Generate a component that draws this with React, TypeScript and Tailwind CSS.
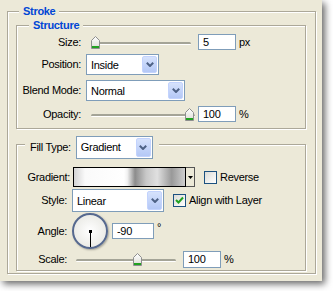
import { ReactNode } from "react";

const etched = "border border-[#ACA899] shadow-[inset_1px_1px_0_#fff,1px_1px_0_#fff]";

function Legend({ children, className }: { children: ReactNode, className: string }) {
	return (
		<div className={`w-fit bg-[#ECE9D8] px-[4px] text-[11px] font-bold leading-[14px] tracking-[-0.3px] text-[#0046D5] ${className}`}>
			{children}
		</div>
	);
}

function Chevron() {
	return (
		<svg width="8" height="5" viewBox="0 0 8 5">
			<path d="M0.8 0.8 L4 4 L7.2 0.8" fill="none" stroke="#4D6185" strokeWidth="2" />
		</svg>
	);
}

function Select({ value, className }: { value: string, className: string }) {
	return (
		<div className={`flex items-stretch border border-[#7F9DB9] bg-white p-px ${className}`}>
			<div className="flex flex-1 items-center pl-[3px] pt-px">{value}</div>
			<div className="flex w-[15px] items-center justify-center rounded-[2px] border border-[#C3D3FD] bg-linear-to-b from-[#D6E2FC] to-[#B4C8F6]">
				<Chevron />
			</div>
		</div>
	);
}

function Input({ value, className }: { value: string, className: string }) {
	return (
		<div className={`flex items-center border border-[#7F9DB9] bg-white pl-[4px] ${className}`}>{value}</div>
	);
}

function Thumb() {
	return (
		<svg width="9" height="13" viewBox="0 0 9 13">
			<defs>
				<linearGradient id="th" x1="0" y1="0" x2="0" y2="1">
					<stop offset="0" stopColor="#ffffff" />
					<stop offset="1" stopColor="#dcdcd4" />
				</linearGradient>
			</defs>
			<path d="M0.5 4.5 L4.5 0.5 L8.5 4.5 L8.5 12.5 L0.5 12.5 Z" fill="url(#th)" stroke="#8E8F8F" />
			<rect x="1" y="10" width="7" height="2" fill="#21A121" />
		</svg>
	);
}

// track with the thumb lying over it
function Slider({ className, thumb }: { className: string, thumb: string }) {
	return (
		<div className={`relative h-[13px] ${className}`}>
			<div className="absolute left-[1px] right-0 top-[6px] h-[3px] rounded-full border-t-2 border-[#A4A497] bg-white" />
			<div className={`absolute top-0 ${thumb}`}><Thumb /></div>
		</div>
	);
}

function Checkbox({ checked }: { checked?: boolean }) {
	return (
		<div className="flex h-[13px] w-[13px] items-center justify-center border border-[#1C5180] bg-linear-to-br from-[#DCDCD7] to-white">
			{checked && (
				<svg width="9" height="9" viewBox="0 0 9 9">
					<path d="M1 4 L3.5 6.5 L8 1.5" fill="none" stroke="#21A121" strokeWidth="2" />
				</svg>
			)}
		</div>
	);
}

export default function App() {
	return (
		<div className="h-[291px] w-[333px] bg-white font-['Liberation_Sans',Arial,sans-serif] text-[11px] leading-[13px] tracking-[-0.3px] text-black">
			<div className="h-[281px] w-[322px] bg-[#ECE9D8] pl-[7px] pt-[11px] shadow-[3px_3px_7px_rgba(0,0,0,0.6)]">

				{/* Stroke */}
				<div className={`flex h-[263px] w-[309px] flex-col ${etched}`}>
					<Legend className="ml-[11px] mt-[-8px]">Stroke</Legend>

					<div className="flex flex-col gap-[15px] pl-[8px] pt-[7px]">
						{/* Structure */}
						<div className={`flex h-[104px] w-[290px] flex-col ${etched}`}>
							<Legend className="ml-[12px] mt-[-8px]">Structure</Legend>

							<div className="mt-[2px] flex flex-col gap-[5px]">
								<div className="flex h-[16px] items-center">
									<div className="w-[64px] text-right">Size:</div>
									<Slider className="ml-[9px] w-[101px]" thumb="left-[1px]" />
									<Input value="5" className="ml-[7px] h-[16px] w-[38px]" />
									<div className="ml-[3px]">px</div>
								</div>

								<div className="-mt-px flex h-[21px] items-center gap-[5px]">
									<div className="w-[64px] text-right">Position:</div>
									<Select value="Inside" className="h-[21px] w-[73px]" />
								</div>

								<div className="flex h-[21px] items-center gap-[5px]">
									<div className="w-[64px] text-right">Blend Mode:</div>
									<Select value="Normal" className="h-[21px] w-[99px]" />
								</div>

								<div className="flex h-[16px] items-center">
									<div className="w-[64px] text-right">Opacity:</div>
									<Slider className="ml-[9px] w-[105px]" thumb="right-[1px]" />
									<Input value="100" className="ml-[3px] h-[16px] w-[38px]" />
									<div className="ml-[3px]">%</div>
								</div>
							</div>
						</div>

						{/* Fill */}
						<div className={`flex h-[127px] w-[290px] flex-col ${etched}`}>
							<div className="ml-[8px] mt-[-9px] flex h-[22px] w-fit items-center gap-[5px] bg-[#ECE9D8] pl-[5px] pr-[6px]">
								<div>Fill Type:</div>
								<Select value="Gradient" className="h-[23px] w-[77px]" />
							</div>

							<div className="mt-[9px] flex flex-col gap-[2px]">
								<div className="flex h-[20px] items-center">
									<div className="w-[53px] text-right">Gradient:</div>
									<div className="ml-[3px] flex h-[20px]">
										<div className="w-[113px] border border-black bg-[linear-gradient(90deg,#d4d4d4_0%,#fafafa_10%,#ffffff_45%,#f2f2f2_48%,#8c8c8c_55%,#c8c8c8_65%,#e0e0e0_75%,#999999_88%,#cfcfcf_100%)]" />
										<div className="flex w-[9px] items-center justify-center border border-l-0 border-[#555]">
											<svg width="5" height="3" viewBox="0 0 5 3"><path d="M0 0 H5 L2.5 3 Z" fill="#000" /></svg>
										</div>
									</div>
									<div className="ml-[9px]"><Checkbox /></div>
									<div className="ml-[3px]">Reverse</div>
								</div>

								<div className="flex h-[23px] items-center">
									<div className="w-[50px] text-right">Style:</div>
									<Select value="Linear" className="ml-[5px] h-[23px] w-[92px]" />
									<div className="ml-[9px]"><Checkbox checked /></div>
									<div className="ml-[3px]">Align with Layer</div>
								</div>

								<div className="-mt-px flex h-[36px] items-center">
									<div className="w-[50px] text-right">Angle:</div>
									<div className="relative ml-[5px] h-[36px] w-[36px] rounded-full border-2 border-[#56698F] bg-radial from-white to-[#E4E4DE] shadow-[1px_1px_2px_rgba(0,0,0,0.3)]">
										<div className="absolute left-[15px] top-[15px] h-[3px] w-[3px] bg-black" />
										<div className="absolute bottom-0 left-[16px] top-[16px] w-px bg-black" />
									</div>
									<Input value="-90" className="ml-[4px] h-[16px] w-[42px]" />
									<div className="mb-[8px] ml-[3px]">°</div>
								</div>

								<div className="flex h-[17px] items-center">
									<div className="w-[50px] text-right">Scale:</div>
									<Slider className="ml-[8px] w-[101px]" thumb="left-[58px]" />
									<Input value="100" className="ml-[7px] h-[17px] w-[38px]" />
									<div className="ml-[3px]">%</div>
								</div>
							</div>
						</div>
					</div>
				</div>
			</div>
		</div>
	);
}
